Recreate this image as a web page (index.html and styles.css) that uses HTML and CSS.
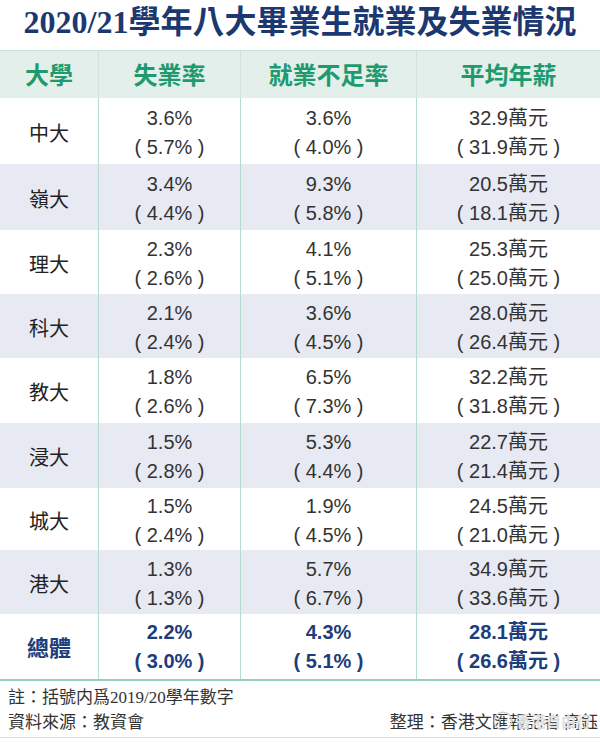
FILE: index.html
```html
<!DOCTYPE html>
<html lang="zh-Hant">
<head>
<meta charset="utf-8">
<title>2020/21學年八大畢業生就業及失業情況</title>
<link rel="stylesheet" href="styles.css">
</head>
<body>
<div class="page">
  <h1 class="title">2020/21學年八大畢業生就業及失業情況</h1>
  <div class="table">
    <div class="row head">
      <div class="cell">大學</div>
      <div class="cell">失業率</div>
      <div class="cell">就業不足率</div>
      <div class="cell">平均年薪</div>
    </div>
    <div class="row">
      <div class="cell name">中大</div>
      <div class="cell"><span>3.6%</span><span>( 5.7% )</span></div>
      <div class="cell"><span>3.6%</span><span>( 4.0% )</span></div>
      <div class="cell"><span>32.9萬元</span><span>( 31.9萬元 )</span></div>
    </div>
    <div class="row alt">
      <div class="cell name">嶺大</div>
      <div class="cell"><span>3.4%</span><span>( 4.4% )</span></div>
      <div class="cell"><span>9.3%</span><span>( 5.8% )</span></div>
      <div class="cell"><span>20.5萬元</span><span>( 18.1萬元 )</span></div>
    </div>
    <div class="row">
      <div class="cell name">理大</div>
      <div class="cell"><span>2.3%</span><span>( 2.6% )</span></div>
      <div class="cell"><span>4.1%</span><span>( 5.1% )</span></div>
      <div class="cell"><span>25.3萬元</span><span>( 25.0萬元 )</span></div>
    </div>
    <div class="row alt">
      <div class="cell name">科大</div>
      <div class="cell"><span>2.1%</span><span>( 2.4% )</span></div>
      <div class="cell"><span>3.6%</span><span>( 4.5% )</span></div>
      <div class="cell"><span>28.0萬元</span><span>( 26.4萬元 )</span></div>
    </div>
    <div class="row">
      <div class="cell name">教大</div>
      <div class="cell"><span>1.8%</span><span>( 2.6% )</span></div>
      <div class="cell"><span>6.5%</span><span>( 7.3% )</span></div>
      <div class="cell"><span>32.2萬元</span><span>( 31.8萬元 )</span></div>
    </div>
    <div class="row alt">
      <div class="cell name">浸大</div>
      <div class="cell"><span>1.5%</span><span>( 2.8% )</span></div>
      <div class="cell"><span>5.3%</span><span>( 4.4% )</span></div>
      <div class="cell"><span>22.7萬元</span><span>( 21.4萬元 )</span></div>
    </div>
    <div class="row">
      <div class="cell name">城大</div>
      <div class="cell"><span>1.5%</span><span>( 2.4% )</span></div>
      <div class="cell"><span>1.9%</span><span>( 4.5% )</span></div>
      <div class="cell"><span>24.5萬元</span><span>( 21.0萬元 )</span></div>
    </div>
    <div class="row alt">
      <div class="cell name">港大</div>
      <div class="cell"><span>1.3%</span><span>( 1.3% )</span></div>
      <div class="cell"><span>5.7%</span><span>( 6.7% )</span></div>
      <div class="cell"><span>34.9萬元</span><span>( 33.6萬元 )</span></div>
    </div>
    <div class="row total">
      <div class="cell name">總體</div>
      <div class="cell"><span>2.2%</span><span>( 3.0% )</span></div>
      <div class="cell"><span>4.3%</span><span>( 5.1% )</span></div>
      <div class="cell"><span>28.1萬元</span><span>( 26.6萬元 )</span></div>
    </div>
  </div>
  <div class="notes">
    <div class="note">註：括號内爲2019/20學年數字</div>
    <div class="note split">
      <span>資料來源：教資會</span>
      <span>整理：香港文匯報記者 高鈺</span>
    </div>
    <div class="watermark">
      <svg class="wm-icon" viewBox="0 0 24 24" width="20" height="20">
        <circle cx="12" cy="12" r="10.5" fill="none" stroke="#cfcfcf" stroke-width="1.6"/>
        <circle cx="8.5" cy="10.5" r="1.3" fill="#cfcfcf"/>
        <circle cx="15.5" cy="10.5" r="1.3" fill="#cfcfcf"/>
      </svg>
      <span class="wm-text">香港自由行</span>
    </div>
  </div>
</div>
</body>
</html>
```

FILE: styles.css
```css
html, body {
  margin: 0;
  padding: 0;
  background: #ffffff;
}

.page {
  width: 600px;
  height: 743px;
  overflow: hidden;
  font-family: "Liberation Sans", "Noto Sans CJK TC", sans-serif;
}

.title {
  margin: 0;
  height: 50px;
  line-height: 45px;
  text-align: center;
  font-family: "Liberation Serif", "Noto Sans CJK TC", serif;
  font-size: 32px;
  font-weight: 700;
  color: #1c3870;
  white-space: nowrap;
}

.table {
  border-top: 1px solid #c6e1d7;
  border-bottom: 2px solid #97cdbb;
}

.row {
  display: grid;
  grid-template-columns: 98px 142px 176px 184px;
  height: 65px;
}

.row:nth-child(2),
.row:nth-child(3) {
  height: 66px;
}

.row:nth-child(4),
.row:nth-child(5),
.row:nth-child(9) {
  height: 64px;
}

.row:nth-child(8) {
  height: 62px;
}

.row.alt {
  background: #e7e9f3;
}

.cell {
  display: flex;
  flex-direction: column;
  align-items: center;
  justify-content: center;
  padding-top: 3px;
  font-size: 20px;
  line-height: 29px;
  color: #333333;
  white-space: pre;
}

.cell + .cell {
  border-left: 1px solid #b5dccf;
}

.cell.name {
  font-family: "Noto Sans CJK TC", sans-serif;
  font-size: 20px;
  color: #222222;
  padding-top: 2px;
}

.row.head {
  height: 47px;
  background: #e3efea;
}

.row.head .cell {
  font-family: "Noto Sans CJK TC", sans-serif;
  font-size: 24px;
  font-weight: 700;
  color: #1e9a6e;
  padding-top: 0;
  padding-bottom: 2px;
}

.row.head .cell + .cell {
  border-left-color: #cfe4dc;
}

.row.total .cell {
  font-weight: 700;
  color: #1d3d7c;
  padding-top: 0;
}

.row.total .cell.name {
  font-size: 22px;
}

.notes {
  position: relative;
  border-bottom: 1px solid #dedede;
  padding: 4px 2px 0 8px;
  box-sizing: border-box;
  height: 57px;
  font-family: "Liberation Serif", "Noto Sans CJK TC", serif;
  font-size: 17px;
  color: #333333;
}

.note {
  line-height: 25px;
  white-space: nowrap;
}

.split {
  display: flex;
  justify-content: space-between;
}

.watermark {
  position: absolute;
  left: 493px;
  top: 28px;
  height: 24px;
  display: flex;
  align-items: center;
  gap: 3px;
  white-space: nowrap;
  pointer-events: none;
}

.wm-icon {
  flex: none;
}

.wm-text {
  font-family: "Noto Sans CJK TC", sans-serif;
  font-size: 15px;
  line-height: 20px;
  font-weight: 700;
  color: rgba(210, 210, 210, 0.7);
  text-shadow: 0 0 1px #ffffff;
  white-space: nowrap;
}
```
